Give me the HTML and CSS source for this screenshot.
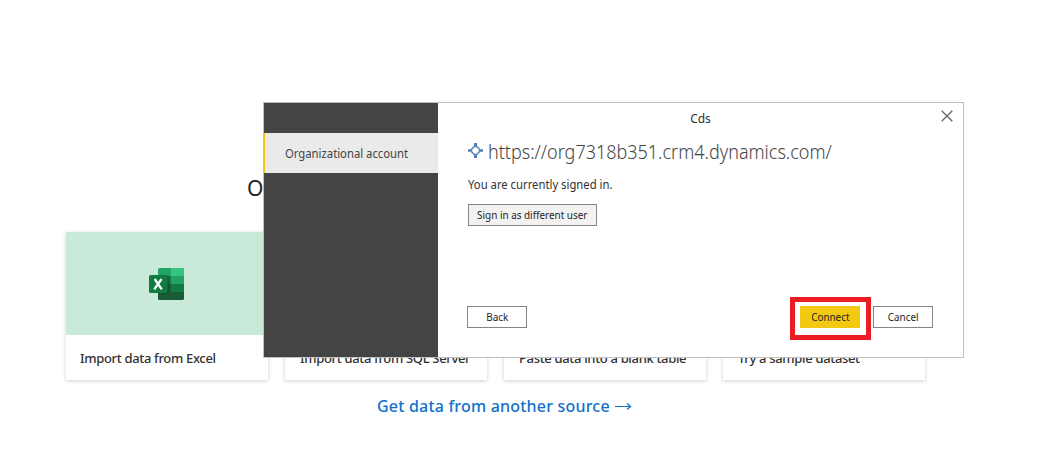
FILE: index.html
```html
<!DOCTYPE html>
<html lang="en">
<head>
<meta charset="utf-8">
<title>Cds</title>
<link rel="stylesheet" href="styles.css">
</head>
<body>
<main class="canvas">
  <h1 class="heading">O</h1>
  <div class="cards">
    <section class="card">
      <div class="card-art">
        <svg width="36" height="32" viewBox="0 0 36 32">
          <path d="M11 0H33.500Q35 0 35 1.500V8H9V1.500Q9 0 11 0Z" fill="#21a366"/>
          <path d="M22 0H33.500Q35 0 35 1.500V8H22Z" fill="#33c481"/>
          <path d="M9 8H22V16H9Z" fill="#107c41"/>
          <path d="M22 8H35V16H22Z" fill="#21a366"/>
          <path d="M9 16H35V30.500Q35 32 33.500 32H10.500Q9 32 9 30.500Z" fill="#185c37"/>
          <path d="M22 16H35V24H22Z" fill="#107c41"/>
          <path d="M9 7H18Q20 7 20 9V24Q20 26 18 26H9Z" fill="#0b4527" opacity=".5"/>
          <rect x="0" y="7" width="18.500" height="18" rx="1.500" fill="#107c41"/>
          <path d="M5.700 11L12.700 21.300M12.500 11L5.300 21.300" stroke="#fff" stroke-width="2.300"/>
        </svg>
      </div>
      <div class="card-label">Import data from Excel</div>
    </section>
    <section class="card">
      <div class="card-art"></div>
      <div class="card-label label-sql">Import data from SQL Server</div>
    </section>
    <section class="card">
      <div class="card-art"></div>
      <div class="card-label label-paste">Paste data into a blank table</div>
    </section>
    <section class="card">
      <div class="card-art"></div>
      <div class="card-label label-sample">Try a sample dataset</div>
    </section>
  </div>
  <a class="more"><span>Get data from another source</span>
    <svg width="17" height="10" viewBox="0 0 17 10"><path d="M0 5.500H15.500M12 2.500L15.500 5.500L12 8.500" fill="none" stroke="#1070cc" stroke-width="1.200"/></svg>
  </a>
</main>

<div class="dialog">
  <aside class="side">
    <div class="tab"><span>Organizational account</span></div>
  </aside>
  <div class="content">
    <div class="title">Cds</div>
    <svg class="close" width="12" height="12" viewBox="0 0 12 12"><path d="M.7.700L11.300 11.300M11.300.7L.7 11.300" stroke="#666" stroke-width="1.300"/></svg>
    <div class="source">
      <svg width="15" height="15" viewBox="0 0 15 15">
        <path d="M6 0H9V4H6ZM6 11H9V15H6ZM0 6.200H4V8.800H0ZM11 6.200H15V8.800H11Z" fill="#4d7fb5"/>
        <path d="M6.300 3.500H8.700L11.500 6.300V8.700L8.700 11.500H6.300L3.500 8.700V6.300Z" fill="#fff" stroke="#5a88ba" stroke-width="1.600"/>
      </svg>
      <span class="url">https://org7318b351.crm4.dynamics.com/</span>
    </div>
    <div class="status"><span>You are currently signed in.</span></div>
    <button class="btn switch"><span>Sign in as different user</span></button>
    <div class="actions">
      <button class="btn back"><span>Back</span></button>
      <div class="highlight"><button class="btn connect"><span>Connect</span></button></div>
      <button class="btn cancel"><span>Cancel</span></button>
    </div>
  </div>
</div>
</body>
</html>
```
FILE: styles.css
```css
* { box-sizing: border-box; }
body {
  margin: 0;
  width: 1038px;
  height: 470px;
  overflow: hidden;
  background: #fff;
  color: #333;
  font-family: "Noto Sans", "Open Sans", sans-serif;
  white-space: nowrap;
}
svg { display: block; flex: none; }
.canvas { padding: 172px 0 0 66px; }
.heading {
  margin: 0 0 28px 181px;
  height: 32px;
  line-height: 32px;
  font-size: 21px;
  font-weight: 400;
  color: #252423;
}
.cards { display: flex; gap: 17px; }
.card {
  width: 202px;
  height: 148px;
  background: #fff;
  box-shadow: 0 1px 4px rgba(0, 0, 0, .2);
}
.card-art {
  height: 103px;
  display: flex;
  padding: 36px 0 0 83px;
  background: #c9ead8;
}
.card-label {
  padding-left: 14px;
  line-height: 46px;
  font-size: 13px;
  font-weight: 500;
  letter-spacing: -.33px;
  color: #323130;
}
.label-sql { padding-left: 15px; }
.label-paste { padding-left: 15px; }
.label-sample { padding-left: 15px; }
.more {
  display: flex;
  align-items: center;
  gap: 5px;
  margin: 13px 0 0 311px;
  height: 26px;
  font-size: 16px;
  font-weight: 500;
  letter-spacing: .2px;
  color: #1070cc;
}
.dialog {
  position: absolute;
  left: 263px;
  top: 102px;
  width: 701px;
  height: 256px;
  display: flex;
  border: 1px solid #c0c0c0;
  background: #fff;
}
.side { width: 174px; padding-top: 30px; background: #444; }
.tab {
  height: 40px;
  padding-left: 20px;
  border-left: 1px solid #f2c811;
  background: #eaeaea;
  line-height: 41px;
  font-size: 12px;
  color: #444;
}
.tab span, .status span {
  display: inline-block;
  transform: scaleX(.94);
  transform-origin: 0 50%;
}
.content { position: relative; flex: 1; padding-left: 29px; }
.title {
  height: 30px;
  margin-left: -29px;
  text-align: center;
  line-height: 31px;
  font-size: 12px;
}
.close { position: absolute; right: 10px; top: 7px; }
.source { display: flex; height: 36px; padding-left: 1px; gap: 5px; }
.source svg { margin-top: 10px; }
.url {
  line-height: 38px;
  font-size: 20px;
  font-weight: 300;
  color: #444;
  transform: scaleX(.9);
  transform-origin: 0 50%;
}
.status { height: 35px; padding-left: 1px; line-height: 31px; font-size: 12px; }
.btn {
  display: flex;
  align-items: center;
  justify-content: center;
  width: 60px;
  height: 22px;
  padding: 0;
  border: 1px solid #858585;
  background: #fff;
  color: #252423;
  font: 11px/20px "Noto Sans", "Open Sans", sans-serif;
}
.btn span { transform: scaleX(.9); }
.switch { width: 129px; margin-left: 1px; background: #f3f2f1; }
.actions { display: flex; margin-top: 71px; }
.back { margin-top: 9px; }
.highlight {
  width: 81px;
  height: 43px;
  margin-left: 263px;
  padding: 4px 0 0 5px;
  border: 5px solid #ed1c24;
}
.connect { border: 0; background: #f2c811; }
.cancel { margin: 9px 0 0 2px; }
```
